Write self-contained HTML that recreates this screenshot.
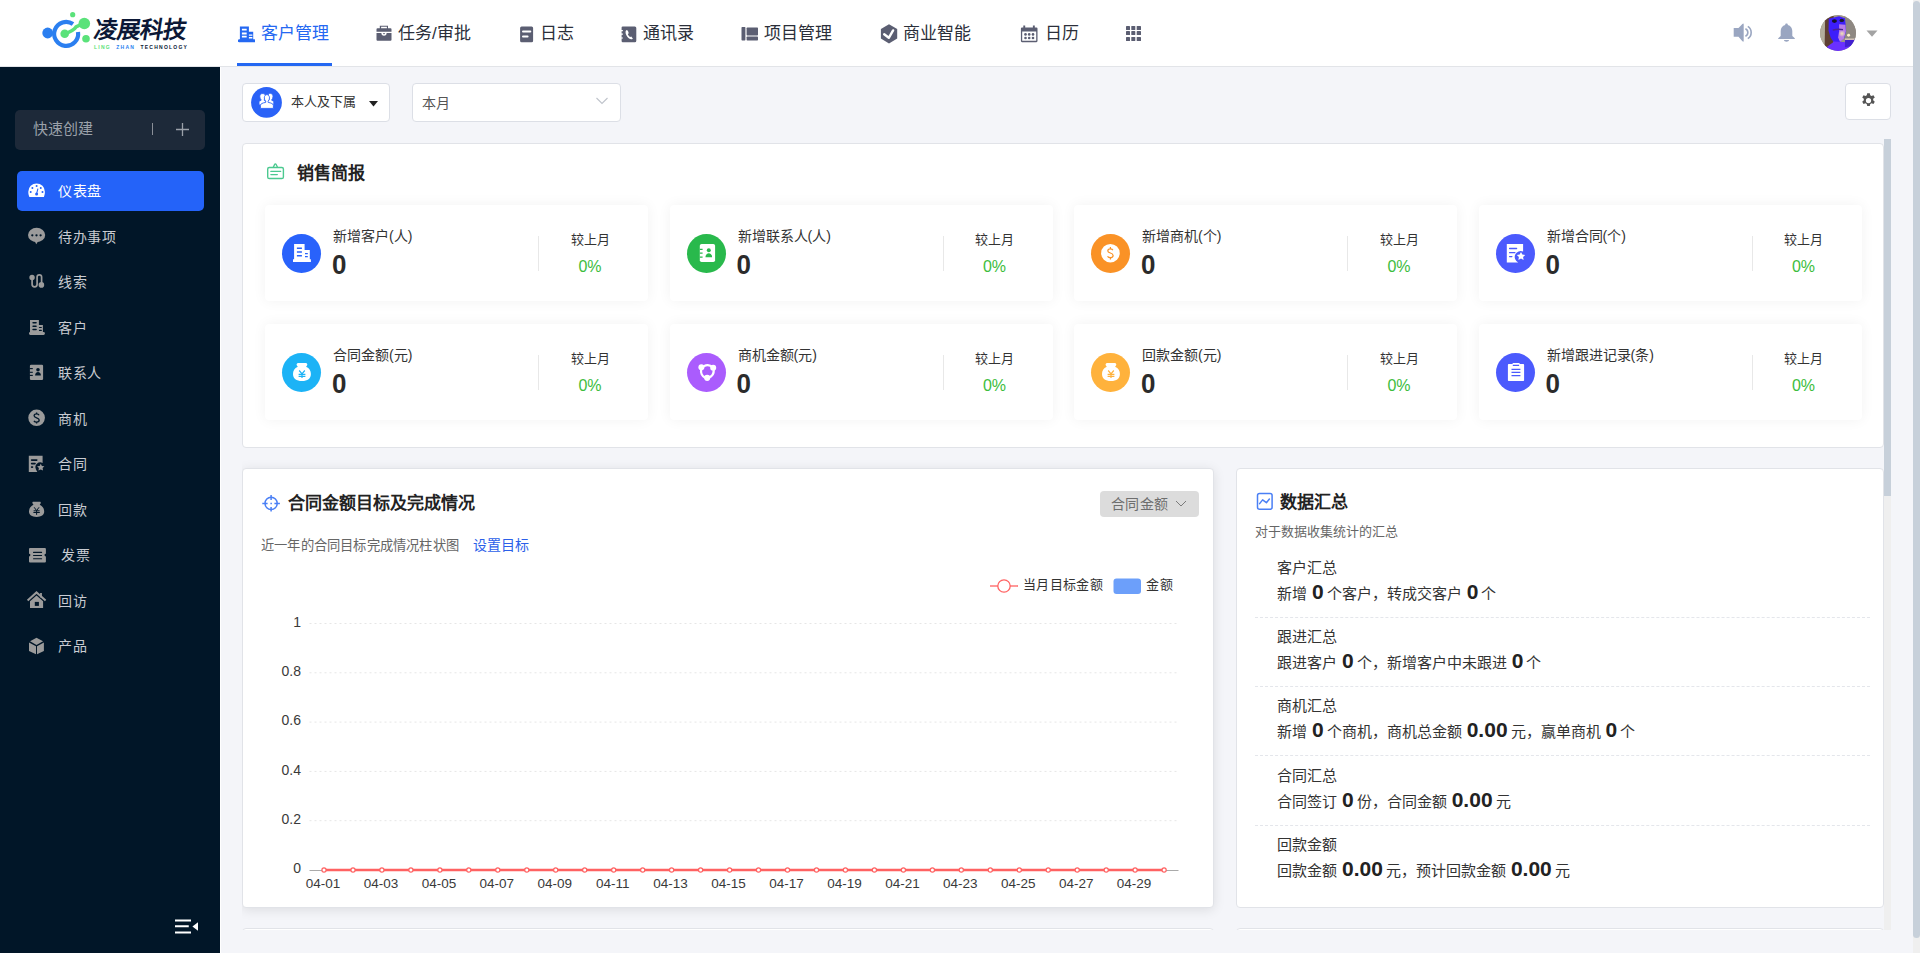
<!DOCTYPE html>
<html lang="zh-CN"><head><meta charset="utf-8">
<style>
*{box-sizing:border-box;margin:0;padding:0}
html,body{width:1920px;height:953px;overflow:hidden;background:#f4f5f9;font-family:"Liberation Sans",sans-serif;color:#333}
.abs{position:absolute}
svg{display:block}
#hdr{position:absolute;left:0;top:0;width:1913px;height:67px;background:#fff;border-bottom:1px solid #e2e4e8}
.nav{position:absolute;top:0;height:66px;font-size:17px;font-weight:500;color:#2b2f3a;white-space:nowrap}
.nav .ic{position:absolute;top:26px;width:16px;height:16px}
.nav .tx{position:absolute;top:23px;line-height:22px}
.nav.on{color:#2468f2}
.nav.on .bar{position:absolute;left:-1px;right:-1px;top:63px;height:3px;background:#2468f2}
#vsb{position:absolute;left:1913px;top:0;width:7px;height:953px;background:#efefef}
#vsb i{position:absolute;left:0;top:1px;width:7px;height:937px;background:#c7d0da;border-radius:4px}
#side{position:absolute;left:0;top:67px;width:220px;height:886px;background:#011628}
#sideline{position:absolute;left:220px;top:67px;width:1px;height:886px;background:#fff}
.qc{position:absolute;left:15px;top:110px;width:190px;height:40px;background:#1d2939;border-radius:5px;color:#9ba1aa;font-size:15px}
.si{position:absolute;left:17px;width:187px;height:40px;border-radius:5px;color:#c9ccd2;font-size:14px;letter-spacing:0.6px}
.si.on{background:#2463f9;color:#fff}
.si .ic{position:absolute;left:11px;top:12px;width:17px;height:17px}
.si .tx{position:absolute;left:41px;top:10px;line-height:20px}
</style></head><body>

<div id="hdr">
  <!-- logo -->
  <svg class="abs" style="left:40px;top:10px" width="56" height="44" viewBox="0 0 56 44">
    <circle cx="7.7" cy="23" r="5.4" fill="#2b7ff0"/>
    <path d="M33 14 A12 12 0 1 0 38 22" fill="none" stroke="#2b7ff0" stroke-width="4.2"/>
    <circle cx="24.7" cy="23.8" r="4.3" fill="#5ae27a"/>
    <path d="M24.7 23.8 C30 22 34 20 36 17 L44.3 13" stroke="#5ae27a" stroke-width="3.6" fill="none"/>
    <circle cx="44.3" cy="13.5" r="5.8" fill="#5ae27a"/>
    <circle cx="32.7" cy="4.7" r="2.6" fill="#5ae27a"/>
    <circle cx="46" cy="28.8" r="3.8" fill="#5ae27a"/>
  </svg>
  <div class="abs" style="left:92px;top:16px;font-size:23.5px;font-weight:900;color:#0c1836;letter-spacing:0px;line-height:28px;transform:skewX(-9deg);transform-origin:0 100%;white-space:nowrap">凌展科技</div>
  <div class="abs" style="left:94px;top:44px;font-size:5px;font-weight:bold;letter-spacing:1.25px;line-height:6px;white-space:nowrap"><span style="color:#5ae27a">LING</span>&nbsp;&nbsp;<span style="color:#2b7ff0">ZHAN</span>&nbsp;&nbsp;<span style="color:#0c1836">TECHNOLOGY</span></div>

  <!-- NAV -->
  <div class="nav on" style="left:238px;width:93px"><span class="tx" style="left:23px">客户管理</span><i class="bar"></i></div>
  <svg class="abs" style="left:237.5px;top:25.5px" width="17" height="17" viewBox="0 0 17 17"><path fill="#2468f2" fill-rule="evenodd" d="M1.9 .4h9v5.3h4.3v7.6h1.1a1.5 1.5 0 0 1 0 3H1.2a1.5 1.5 0 0 1 0-3h.7z M3.9 2.7h4.8v1.9H3.9z M3.9 6.5h4.8v1.9H3.9z M3.9 9.8h4.8v1.8H3.9z M10.9 8.4h3.5v1.3h-3.5z M10.9 10.9h3.5v1.5h-3.5z"/></svg>
  <div class="nav" style="left:376px"><span class="tx" style="left:22px">任务/审批</span></div>
  <svg class="abs" style="left:375.5px;top:25px" width="16" height="16" viewBox="0 0 16 16"><path fill="#5b5e72" fill-rule="evenodd" d="M3.8.7h8.2v2.5h2.5a1 1 0 0 1 1 1v2.5H.5V4.2a1 1 0 0 1 1-1h2.3z M5.1 1.8v1.4h5.8V1.8z M.5 8.1h4.9a2.6 2.6 0 0 0 5.2 0h4.9v6.6a1 1 0 0 1-1 1h-13a1 1 0 0 1-1-1z"/><path fill="#5b5e72" d="M6.8 8.1h2.4l-1.2 1.5z"/></svg>
  <div class="nav" style="left:519px"><span class="tx" style="left:21px">日志</span></div>
  <svg class="abs" style="left:518.5px;top:25.5px" width="16" height="17" viewBox="0 0 16 17"><path fill="#5b5e72" fill-rule="evenodd" d="M2.6.4h10a1.5 1.5 0 0 1 1.5 1.5v12.8a1.5 1.5 0 0 1-1.5 1.5h-10a1.5 1.5 0 0 1-1.5-1.5V1.9A1.5 1.5 0 0 1 2.6.4z M4 4.5a1 1 0 0 0 0 2h7.3a1 1 0 0 0 0-2z M4 9.4a1 1 0 0 0 0 2h4.6a1 1 0 0 0 0-2z"/></svg>
  <div class="nav" style="left:621px"><span class="tx" style="left:22px">通讯录</span></div>
  <svg class="abs" style="left:620.5px;top:25.5px" width="16" height="17" viewBox="0 0 16 17"><path fill="#5b5e72" fill-rule="evenodd" d="M1.8.4h12a1.5 1.5 0 0 1 1.5 1.5v12.8a1.5 1.5 0 0 1-1.5 1.5h-12a1.2 1.2 0 0 1-1.2-1.2V12.6h1.3v-1.1H.6V8.7h1.3V7.6H.6V5.2h1.3V4.1H.6V1.6A1.2 1.2 0 0 1 1.8.4z M5.6 3.9c-1.2.5-1.5 2.7-.2 5.3 1.5 2.9 4 4.6 5.6 4l.9-.5-1.6-2.3-1.2.6c-.9-.5-1.9-1.8-2.3-3l1-.7-.9-2.6z"/></svg>
  <div class="nav" style="left:741px"><span class="tx" style="left:23px">项目管理</span></div>
  <svg class="abs" style="left:740.5px;top:25.5px" width="18" height="16" viewBox="0 0 18 16"><g fill="#5b5e72"><rect x="0.5" y="1" width="3.9" height="13.4" rx="0.7"/><rect x="5.6" y="1.5" width="11.4" height="7.9" rx="0.7"/><rect x="5.6" y="10.6" width="11.4" height="3.8" rx="0.7"/></g></svg>
  <div class="nav" style="left:880px"><span class="tx" style="left:23px">商业智能</span></div>
  <svg class="abs" style="left:879.5px;top:23.5px" width="18" height="20" viewBox="0 0 18 20"><path fill="#5b5e72" fill-rule="evenodd" d="M9 .3l8.2 4.7v9.5L9 19.4.9 14.5V5z"/><path fill="none" stroke="#fff" stroke-width="2.4" stroke-linecap="round" stroke-linejoin="round" d="M4.2 10.2l4.6 3.6 4.3-7.4"/></svg>
  <div class="nav" style="left:1020px"><span class="tx" style="left:25px">日历</span></div>
  <svg class="abs" style="left:1019.5px;top:24.5px" width="18" height="18" viewBox="0 0 18 18"><path fill="#5b5e72" fill-rule="evenodd" d="M3.3.4h1.9v2.1h7.7V.4h1.9v2.1h1.6a1.1 1.1 0 0 1 1.1 1.1v12.5a1.1 1.1 0 0 1-1.1 1.1H2a1.1 1.1 0 0 1-1.1-1.1V3.6A1.1 1.1 0 0 1 2 2.5h1.3z M2.2 6.4v9.3h14V6.4z"/><g fill="#5b5e72"><circle cx="5.5" cy="9.4" r="1.3"/><circle cx="9.2" cy="9.4" r="1.3"/><circle cx="13" cy="9.4" r="1.3"/><circle cx="5.5" cy="13" r="1.3"/><circle cx="9.2" cy="13" r="1.3"/><circle cx="13" cy="13" r="1.3"/></g></svg>
  <svg class="abs" style="left:1126px;top:26px" width="15" height="15" viewBox="0 0 15 15"><g fill="#5b5e72"><rect x="0" y="0" width="4" height="4" rx=".6"/><rect x="5.3" y="0" width="4" height="4" rx=".6"/><rect x="10.7" y="0" width="4.3" height="4" rx=".6"/><rect x="0" y="5.1" width="4" height="4" rx=".6"/><rect x="5.3" y="5.1" width="4" height="4" rx=".6"/><rect x="10.7" y="5.1" width="4.3" height="4" rx=".6"/><rect x="0" y="10.9" width="4" height="4.1" rx=".6"/><rect x="5.3" y="10.9" width="4" height="4.1" rx=".6"/><rect x="10.7" y="10.9" width="4.3" height="4.1" rx=".6"/></g></svg>

  <!-- right icons -->
  <svg class="abs" style="left:1726px;top:16px" width="30" height="30" viewBox="1726 16 30 30"><path fill="#9aa6c1" d="M1733.7 28.1H1738.5L1742.4 24.1Q1743.7 22.9 1743.7 24.6V40.7Q1743.7 42.4 1742.4 41.2L1738.5 36.8H1733.7z"/><path fill="none" stroke="#9aa6c1" stroke-width="1.6" d="M1745.4 28.7A4.1 4.1 0 0 1 1745.4 36.2 M1747.8 26.3A7.3 7.3 0 0 1 1747.8 38.6"/></svg>
  <svg class="abs" style="left:1772px;top:16px" width="30" height="30" viewBox="1772 16 30 30"><path fill="#9aa6c1" d="M1786.5 23.4c.8 0 1.3.5 1.3 1.2v.4c2.9.7 4.5 3.1 4.5 6.1v4.9l2.5 2.3v.6h-16.6v-.6l2.5-2.3v-4.9c0-3 1.6-5.4 4.5-6.1v-.4c0-.7.5-1.2 1.3-1.2z M1784 40.1h5c0 1-1.1 1.7-2.5 1.7s-2.5-.7-2.5-1.7z"/></svg>
  <svg class="abs" style="left:1819.5px;top:14.8px" width="36" height="36" viewBox="110 100 736 736">
    <defs><clipPath id="av"><circle cx="478" cy="468" r="367"/></clipPath>
    <filter id="avb" x="-5%" y="-5%" width="110%" height="110%"><feGaussianBlur stdDeviation="16"/></filter><radialGradient id="hl" cx="0.5" cy="0.5" r="0.5"><stop offset="0" stop-color="#f3e6b0"/><stop offset="1" stop-color="#f3e6b0" stop-opacity="0"/></radialGradient></defs>
    <g clip-path="url(#av)"><g>
      <rect x="100" y="90" width="760" height="760" fill="#9d9486"/>
      <rect x="100" y="90" width="130" height="760" fill="#b3ad9c"/>
      <path d="M215 140 L390 120 L380 780 L205 780z" fill="#5e3f33"/>
      <rect x="600" y="90" width="260" height="500" fill="#8e8882"/>
      <path d="M290 175 L500 125 L620 165 L645 420 L610 560 L520 650 L400 665 L330 570 L285 420z" fill="#3d1efa"/>
      <path d="M500 290 L630 300 L640 430 L600 580 L520 650 L480 560 L500 430z" fill="#b77de8"/>
      <circle cx="560" cy="480" r="70" fill="url(#hl)"/>
      <path d="M370 410 Q470 380 580 400" stroke="#4a2590" stroke-width="28" fill="none"/>
      <path d="M200 790 L400 640 L600 650 L760 700 L870 800 L870 880 L200 880z" fill="#6a30ff"/>
      <path d="M620 590 L820 590 L820 720 L620 760z" fill="#4220d0"/>
      <rect x="620" y="580" width="200" height="30" fill="#d8c9b8"/>
      <circle cx="695" cy="515" r="30" fill="#fff4c8"/>
    </g><ellipse cx="405" cy="225" rx="52" ry="36" fill="#14102a"/><ellipse cx="555" cy="210" rx="46" ry="34" fill="#1c1830"/></g>
  </svg>
  <svg class="abs" style="left:1866px;top:30px" width="12" height="7" viewBox="0 0 12 7"><path d="M0.5 0.5h11L6 6.8z" fill="#a3a3a3"/></svg>
</div>

<div id="vsb"><i></i></div>

<!-- SIDEBAR -->
<div id="side"></div>
<div id="sideline"></div>
<div class="qc"><span class="abs" style="left:18px;top:9px;line-height:20px">快速创建</span><i class="abs" style="left:137px;top:13px;width:1px;height:12px;background:#8a8f98"></i><svg class="abs" style="left:161px;top:13px" width="13" height="13" viewBox="0 0 13 13"><path d="M6.5 0v13M0 6.5h13" stroke="#9ba1aa" stroke-width="1.3"/></svg></div>

<div class="si on" style="top:171.0px"><span class="tx" style="left:41px">仪表盘</span></div>
<div class="si" style="top:216.5px"><span class="tx" style="left:41px">待办事项</span></div>
<div class="si" style="top:262.0px"><span class="tx" style="left:41px">线索</span></div>
<div class="si" style="top:307.5px"><span class="tx" style="left:41px">客户</span></div>
<div class="si" style="top:353.0px"><span class="tx" style="left:41px">联系人</span></div>
<div class="si" style="top:398.5px"><span class="tx" style="left:41px">商机</span></div>
<div class="si" style="top:444.0px"><span class="tx" style="left:41px">合同</span></div>
<div class="si" style="top:489.5px"><span class="tx" style="left:41px">回款</span></div>
<div class="si" style="top:535.0px"><span class="tx" style="left:44px">发票</span></div>
<div class="si" style="top:580.5px"><span class="tx" style="left:41px">回访</span></div>
<div class="si" style="top:626.0px"><span class="tx" style="left:41px">产品</span></div><svg class="abs" style="left:0;top:0" width="220" height="953" viewBox="0 0 220 953">
<path fill="#fff" d="M36.6 183.4a8.3 8.3 0 0 1 8.3 8.3c0 2-.4 3.6-1 5.2H29.4c-.7-1.6-1.1-3.2-1.1-5.2a8.3 8.3 0 0 1 8.3-8.3z"/>
<g fill="#2463f9"><circle cx="36.6" cy="186.1" r="1"/><circle cx="32.4" cy="188" r="1"/><circle cx="40.75" cy="188" r="1"/><circle cx="30.7" cy="192" r="1"/><circle cx="42.5" cy="192" r="1"/><circle cx="36.6" cy="193.9" r="1.5"/></g>
<path stroke="#2463f9" stroke-width="1.1" d="M36.6 193.9L37.9 188.6"/>
<ellipse cx="36.6" cy="235" rx="8.6" ry="7.2" fill="#9b9b9b"/><path fill="#9b9b9b" d="M34.6 241l1.7 3.2 1.9-3.2z"/>
<g fill="#011628"><circle cx="32.3" cy="235.3" r="1.15"/><circle cx="36.5" cy="235.3" r="1.15"/><circle cx="40.6" cy="235.3" r="1.15"/></g>
<path fill="none" stroke="#9b9b9b" stroke-width="1.7" d="M32.1 277.6V284.3a2.5 2.5 0 0 0 5 0V277.05a2.25 2.25 0 0 1 4.5 0V284.9"/>
<circle cx="32.06" cy="277.56" r="2.7" fill="#9b9b9b"/><circle cx="41.4" cy="284.9" r="2.8" fill="#9b9b9b"/>
<path fill="#9b9b9b" d="M30 319.9h8.9v5.1h4v7h.6a1.45 1.45 0 0 1 0 2.9H30.4a1.45 1.45 0 0 1 0-2.9h-.4z"/>
<g fill="#011628"><rect x="32.3" y="322" width="4.5" height="1.6" rx=".8"/><rect x="32.3" y="325.5" width="4.5" height="1.6" rx=".8"/><rect x="32.3" y="328.7" width="4.5" height="1.6" rx=".8"/><rect x="38.9" y="326.9" width="3" height="1.2" rx=".6"/><rect x="38.9" y="329.8" width="3" height="1.2" rx=".6"/></g>
<rect x="29.9" y="364.8" width="13.2" height="15.1" rx="1.2" fill="#9b9b9b"/>
<g fill="#011628"><rect x="29.5" y="368.05" width="3.3" height="1.1"/><rect x="29.5" y="371.75" width="3.3" height="1.1"/><rect x="29.5" y="374.85" width="3.3" height="1.1"/><circle cx="38" cy="369.7" r="1.8"/><path d="M35.1 375.6c0-2.1 1.3-3.5 2.9-3.5s2.9 1.4 2.9 3.5z"/></g>
<circle cx="36.6" cy="417.8" r="8.3" fill="#9b9b9b"/>
<path fill="none" stroke="#011628" stroke-width="1.3" d="M39.1 415.2c-.4-.8-1.3-1.3-2.5-1.3-1.4 0-2.5.8-2.5 1.9 0 2.6 5.1 1.6 5.1 4.3 0 1.1-1.1 2-2.6 2-1.2 0-2.2-.5-2.7-1.3 M36.6 412.6v1.3 M36.6 422.1v1.5"/>
<path fill="#9b9b9b" d="M28.8 455.8h13.8v7.2a4.8 4.8 0 0 0-6.6 6.4l1.3 2.5H28.8z"/>
<g fill="#011628"><rect x="30.8" y="459.3" width="6.8" height="1.6" rx=".8"/><rect x="30.8" y="462.8" width="5" height="1.6" rx=".8"/><rect x="30.8" y="466.3" width="2.5" height="1.6" rx=".8"/></g>
<path fill="#9b9b9b" d="M40.75 463.7l1.15 2.3 2.5.35-1.8 1.75.45 2.5-2.3-1.2-2.3 1.2.45-2.5-1.8-1.75 2.5-.35z"/>
<path fill="#9b9b9b" d="M33.2 501.8h6.6c.9 0 1.3 1 .8 1.7l-.9 1.3c3 1.2 4.5 4 4.5 6.8 0 3.4-2.8 5.3-7.6 5.3s-7.6-1.9-7.6-5.3c0-2.8 1.5-5.6 4.5-6.8l-.9-1.3c-.5-.7-.1-1.7.6-1.7z"/>
<path fill="none" stroke="#011628" stroke-width="1" d="M34.2 507.3l2.4 3.3 2.4-3.3 M33.6 510.8h6 M33.4 512.5h6.4 M36.6 510.6v4.2"/>
<path fill="#9b9b9b" d="M30 547.9h14.9a1 1 0 0 1 1 1v4.8a1.4 1.4 0 0 0 0 2.8v5.1a1 1 0 0 1-1 1H30a1 1 0 0 1-1-1v-5.1a1.4 1.4 0 0 0 0-2.8v-4.8a1 1 0 0 1 1-1z"/>
<g fill="#011628"><rect x="33" y="551.85" width="9.1" height="1.1" rx=".5"/><rect x="33" y="554.95" width="9.1" height="1.1" rx=".5"/><rect x="33" y="558.15" width="9.1" height="1.1" rx=".5"/></g>
<path fill="none" stroke="#9b9b9b" stroke-width="2" stroke-linejoin="miter" d="M27.6 600.6L36.5 592.4L45.6 600.6"/>
<path fill="#9b9b9b" d="M40.1 593h1.8v4.5h-1.8z M36.5 595.6l6.6 5.6v6.7H30v-6.7z"/>
<rect x="34.8" y="601.9" width="4.1" height="4" fill="#011628"/>
<path fill="#9b9b9b" d="M30.05 641.3L36.5 637.8L43.1 641.3L36.5 645z M29 642.6L36 646.2V654.2L29 651.1z M37 646.2L43.9 642.6V651.1L37 654.2z"/>
<path fill="#fff" d="M175 919.5h16v2h-16z M175 925.25h13.75v2h-13.75z M175 931.5h16v2h-16z M198 922.3v8.4l-5.6-4.2z"/>
</svg>



<style>
.box{position:absolute;background:#fff;border:1px solid #dcdfe6;border-radius:4px}
#scroll{position:absolute;left:242px;top:139px;width:1642px;height:791px;overflow:hidden}
#isb{position:absolute;left:1884px;top:139px;width:7px;height:791px;background:#efefef}
#isb i{position:absolute;left:0;top:0;width:7px;height:357px;background:#c7d0da}
.panel{position:absolute;background:#fff;border:1px solid #e1e3e8;border-radius:4px}
.panel.sh{box-shadow:0 2px 12px rgba(0,0,0,.1)}
.card{position:absolute;width:383px;height:96px;background:#fff;border-radius:4px;box-shadow:0 0 14px rgba(0,0,0,.055)}
.card .circ{position:absolute;left:17px;top:29px;width:39px;height:39px;border-radius:50%}
.card .circ svg{position:absolute;left:0;top:0}
.card .lb{position:absolute;left:68px;top:21px;font-size:14px;line-height:20px;color:#333;white-space:nowrap}
.card .val{position:absolute;left:67px;top:45px;font-size:26px;font-weight:bold;line-height:30px;color:#2b2b2b;transform:scaleY(1.05);transform-origin:0 100%}
.card .dv{position:absolute;left:273px;top:31px;width:1px;height:35px;background:#e8e8e8}
.card .cmp{position:absolute;left:290px;width:70px;text-align:center;top:25px;font-size:13px;line-height:20px;color:#333}
.card .pct{position:absolute;left:290px;width:70px;text-align:center;top:52px;font-size:16px;line-height:20px;color:#3dbd3d}
.ptitle{position:absolute;font-size:17px;font-weight:bold;color:#222;line-height:24px;white-space:nowrap}
.sum{position:absolute;left:40px;font-size:15px;color:#333;white-space:nowrap}
.sum b{font-size:21px;font-weight:bold;color:#222;margin:0 3px 0 5px}
.sep{position:absolute;left:18px;right:13px;height:0;border-top:1px dashed #e4e6eb}
</style>

<div class="box" style="left:242px;top:83px;width:148px;height:39px"></div>
<svg class="abs" style="left:250px;top:86px" width="34" height="34" viewBox="250 86 34 34"><circle cx="266.5" cy="102.4" r="15.4" fill="#2a62f7"/><g fill="#fff" stroke="#2a62f7" stroke-width="0.9"><path d="M263.2 93.6c1.4 0 2.3 1.3 2.3 3 0 1.3-.5 2.4-1.2 3l.1.9c1 .3 1.5.7 1.5 1.5V105H259v-3c0-.8.6-1.3 1.9-1.5l.1-.9c-.7-.6-1.2-1.7-1.2-3 0-1.7 1-3 2.3-3z"/><path d="M270.7 93.6c1.4 0 2.3 1.3 2.3 3 0 1.3-.5 2.4-1.2 3l.1.9c1.3.2 1.9.7 1.9 1.5v3h-6.3v-3.4c0-.8.5-1.2 1.5-1.5l.1-.9c-.7-.6-1.2-1.7-1.2-3 0-1.7 1-3 2.3-3z"/><path d="M266.9 94.6c1.5 0 2.6 1.4 2.6 3.3 0 1.4-.6 2.6-1.4 3.3l.1 1.2c2.9.5 5.2 1.4 5.2 3.1v2.9h-13v-2.9c0-1.7 2.3-2.6 5.2-3.1l.1-1.2c-.8-.7-1.4-1.9-1.4-3.3 0-1.9 1.1-3.3 2.6-3.3z"/></g></svg>
<div class="abs" style="left:291px;top:92px;font-size:13px;line-height:20px;color:#333">本人及下属</div>
<svg class="abs" style="left:369px;top:100.8px" width="9" height="6" viewBox="0 0 9 6"><path d="M0 0h9L4.5 5.5z" fill="#222"/></svg>
<div class="box" style="left:412px;top:83px;width:209px;height:39px"></div>
<div class="abs" style="left:422px;top:93px;font-size:14px;line-height:20px;color:#555">本月</div>
<svg class="abs" style="left:596px;top:97px" width="12" height="8" viewBox="0 0 12 8"><path d="M.5 1l5.5 5.5L11.5 1" fill="none" stroke="#bfc3cb" stroke-width="1.1"/></svg>
<div class="box" style="left:1845px;top:83px;width:46px;height:37px"></div>
<svg class="abs" style="left:1860.5px;top:92.8px" width="15" height="15" viewBox="0 0 16 16"><path fill="#555" fill-rule="evenodd" d="M6.6.3h2.8l.45 2.2 1.35.75 2.1-.85 1.4 2.35-1.7 1.5v1.6l1.7 1.5-1.4 2.35-2.1-.85-1.35.8-.45 2.15H6.6l-.45-2.15-1.35-.8-2.1.85-1.4-2.35 1.7-1.5v-1.6l-1.7-1.5 1.4-2.35 2.1.85 1.35-.75z M8 5.2a2.8 2.8 0 1 0 0 5.6 2.8 2.8 0 0 0 0-5.6z"/></svg>
<div id="isb"><i></i></div>
<div id="scroll">
<div class="abs" style="left:-242px;top:-139px;width:1920px;height:953px">
<div class="panel" style="left:242px;top:143px;width:1642px;height:305px"></div>
<svg class="abs" style="left:260px;top:158px" width="30" height="28" viewBox="260 158 30 28"><g fill="none" stroke="#4cc990" stroke-width="1.4" stroke-linecap="round"><rect x="267.7" y="167.5" width="15.7" height="11" rx="1.6"/><path d="M273.3 167.3l1.4-3c.3-.6 1-.6 1.3 0l1.5 3"/><path d="M270.9 171.4h9.7 M270.9 174.6h6.4"/></g></svg>
<div class="ptitle" style="left:297px;top:162px">销售简报</div>
<div class="card" style="left:265.0px;top:205px"><div class="circ" style="background:#2962fb"><svg width="40" height="40" viewBox="0 0 40 40"><path fill="#fff" d="M12.1 10h10.5v6h5.2v9.2h1.1v2.9H11v-2.9h1.1z"/><path fill="#2962fb" d="M14.9 13.4h5v1.5h-5z M14.9 17.3h5v1.5h-5z M14.9 21.1h5v1.5h-5z M23 19h2.8v1.2H23z M23 22h2.8v1.2H23z"/></svg></div><div class="lb">新增客户(人)</div><div class="val">0</div><i class="dv"></i><div class="cmp">较上月</div><div class="pct">0%</div></div>
<div class="card" style="left:669.5px;top:205px"><div class="circ" style="background:#29b94c"><svg width="40" height="40" viewBox="0 0 40 40"><rect x="12.8" y="10" width="15.3" height="18.1" rx="1.8" fill="#fff"/><path fill="#29b94c" d="M12.8 14.7h2.8v1.2h-2.8z M12.8 18.6h2.8v1.2h-2.8z M12.8 22.5h2.8v1.2h-2.8z"/><circle cx="21.8" cy="16.3" r="2" fill="#29b94c"/><path fill="#29b94c" d="M18.5 23.2c0-2.3 1.5-4 3.3-4s3.3 1.7 3.3 4z"/></svg></div><div class="lb">新增联系人(人)</div><div class="val">0</div><i class="dv"></i><div class="cmp">较上月</div><div class="pct">0%</div></div>
<div class="card" style="left:1074.0px;top:205px"><div class="circ" style="background:#fa9226"><svg width="40" height="40" viewBox="0 0 40 40"><circle cx="19.4" cy="19.2" r="9.3" fill="#fff"/><path fill="none" stroke="#fa9226" stroke-width="1.2" d="M21.9 16.1c-.5-.7-1.5-1.2-2.5-1.2-1.5 0-2.6.8-2.6 2 0 2.7 5.3 1.6 5.3 4.5 0 1.2-1.2 2.2-2.8 2.2-1.1 0-2.1-.5-2.8-1.3 M19.4 13v1.9 M19.4 23.5v1.9"/></svg></div><div class="lb">新增商机(个)</div><div class="val">0</div><i class="dv"></i><div class="cmp">较上月</div><div class="pct">0%</div></div>
<div class="card" style="left:1478.5px;top:205px"><div class="circ" style="background:#4b5afd"><svg width="40" height="40" viewBox="0 0 40 40"><path fill="#fff" d="M10.8 10h16.3v7.6a5.2 5.2 0 0 0-4.9 10.8H10.8z"/><path stroke="#4b5afd" stroke-width="1.3" stroke-linecap="round" d="M13.6 14.5h7 M13.6 18.7h5.3 M13.6 22.6h2.3"/><path fill="#fff" d="M25 17.9l1.3 2.7 2.9.4-2.1 2 .5 2.9-2.6-1.4-2.6 1.4.5-2.9-2.1-2 2.9-.4z"/></svg></div><div class="lb">新增合同(个)</div><div class="val">0</div><i class="dv"></i><div class="cmp">较上月</div><div class="pct">0%</div></div>
<div class="card" style="left:265.0px;top:324px"><div class="circ" style="background:#1cb3f6"><svg width="40" height="40" viewBox="0 0 40 40"><path fill="#fff" d="M16.2 10h7.6c1.3 0 2 1.5 1.2 2.6l-.9 1.1c3.4 1.4 4.8 4.3 4.8 7.3 0 4.5-3.2 7.1-8.9 7.1s-9-2.6-9-7.1c0-3 1.4-5.9 4.8-7.3l-.9-1.1c-.8-1.1-.1-2.6 1.3-2.6z"/><path fill="none" stroke="#1cb3f6" stroke-width="1.2" d="M17.2 17.5l2.8 3.3 2.8-3.3 M16.6 21.3h6.8 M16.6 23.4h6.8 M20 20.8v4.1"/></svg></div><div class="lb">合同金额(元)</div><div class="val">0</div><i class="dv"></i><div class="cmp">较上月</div><div class="pct">0%</div></div>
<div class="card" style="left:669.5px;top:324px"><div class="circ" style="background:#aa5cfd"><svg width="40" height="40" viewBox="0 0 40 40"><g fill="none" stroke="#fff" stroke-width="2.3"><path d="M14.2 16.5c-.7 3.3.9 6.7 3.9 8.1 M16.8 13.2c3-1.5 6.7-1 9 1.2 M26.7 17.1c.2 3.3-1.9 6.4-4.9 7.5"/></g><circle cx="14.4" cy="14.2" r="3" fill="#fff"/><circle cx="26.2" cy="14.7" r="3" fill="#fff"/><circle cx="20.2" cy="24.8" r="3.1" fill="#fff"/></svg></div><div class="lb">商机金额(元)</div><div class="val">0</div><i class="dv"></i><div class="cmp">较上月</div><div class="pct">0%</div></div>
<div class="card" style="left:1074.0px;top:324px"><div class="circ" style="background:#ffb23c"><svg width="40" height="40" viewBox="0 0 40 40"><path fill="#fff" d="M16.2 10h7.6c1.3 0 2 1.5 1.2 2.6l-.9 1.1c3.4 1.4 4.8 4.3 4.8 7.3 0 4.5-3.2 7.1-8.9 7.1s-9-2.6-9-7.1c0-3 1.4-5.9 4.8-7.3l-.9-1.1c-.8-1.1-.1-2.6 1.3-2.6z"/><path fill="none" stroke="#ffb23c" stroke-width="1.2" d="M17.2 17.5l2.8 3.3 2.8-3.3 M16.6 21.3h6.8 M16.6 23.4h6.8 M20 20.8v4.1"/></svg></div><div class="lb">回款金额(元)</div><div class="val">0</div><i class="dv"></i><div class="cmp">较上月</div><div class="pct">0%</div></div>
<div class="card" style="left:1478.5px;top:324px"><div class="circ" style="background:#4b5afd"><svg width="40" height="40" viewBox="0 0 40 40"><path fill="#fff" d="M12.7 11.1h3.7l.5-1.1h6.4l.5 1.1h3.5a.8.8 0 0 1 .8.8v15.4a.8.8 0 0 1-.8.8H12.7a.8.8 0 0 1-.8-.8V11.9a.8.8 0 0 1 .8-.8z"/><path stroke="#4b5afd" stroke-width="1.3" d="M15.5 16.3h8.9 M15.5 19.4h8.9 M15.5 22.6h8.9 M16.8 12.4h6.3"/></svg></div><div class="lb">新增跟进记录(条)</div><div class="val">0</div><i class="dv"></i><div class="cmp">较上月</div><div class="pct">0%</div></div>
<div class="panel sh" style="left:242px;top:468px;width:972px;height:440px">
<svg class="abs" style="left:-1px;top:-1px" width="971" height="439" viewBox="242 468 971 439"><line x1="309.5" x2="1178.5" y1="623.5" y2="623.5" stroke="#e6e6e6" stroke-width="1" stroke-dasharray="2 3"/><line x1="309.5" x2="1178.5" y1="672.8" y2="672.8" stroke="#e6e6e6" stroke-width="1" stroke-dasharray="2 3"/><line x1="309.5" x2="1178.5" y1="722.1" y2="722.1" stroke="#e6e6e6" stroke-width="1" stroke-dasharray="2 3"/><line x1="309.5" x2="1178.5" y1="771.4" y2="771.4" stroke="#e6e6e6" stroke-width="1" stroke-dasharray="2 3"/><line x1="309.5" x2="1178.5" y1="820.7" y2="820.7" stroke="#e6e6e6" stroke-width="1" stroke-dasharray="2 3"/><line x1="309.5" x2="1178.5" y1="870.5" y2="870.5" stroke="#aaaaaa" stroke-width="1"/><polyline points="324,870 1164,870" stroke="#ff6262" stroke-width="2.3" fill="none"/><circle cx="324.0" cy="870" r="2.1" fill="#fff" stroke="#ff6262" stroke-width="1.2"/><circle cx="353.0" cy="870" r="2.1" fill="#fff" stroke="#ff6262" stroke-width="1.2"/><circle cx="381.9" cy="870" r="2.1" fill="#fff" stroke="#ff6262" stroke-width="1.2"/><circle cx="410.9" cy="870" r="2.1" fill="#fff" stroke="#ff6262" stroke-width="1.2"/><circle cx="439.9" cy="870" r="2.1" fill="#fff" stroke="#ff6262" stroke-width="1.2"/><circle cx="468.8" cy="870" r="2.1" fill="#fff" stroke="#ff6262" stroke-width="1.2"/><circle cx="497.8" cy="870" r="2.1" fill="#fff" stroke="#ff6262" stroke-width="1.2"/><circle cx="526.8" cy="870" r="2.1" fill="#fff" stroke="#ff6262" stroke-width="1.2"/><circle cx="555.7" cy="870" r="2.1" fill="#fff" stroke="#ff6262" stroke-width="1.2"/><circle cx="584.7" cy="870" r="2.1" fill="#fff" stroke="#ff6262" stroke-width="1.2"/><circle cx="613.7" cy="870" r="2.1" fill="#fff" stroke="#ff6262" stroke-width="1.2"/><circle cx="642.7" cy="870" r="2.1" fill="#fff" stroke="#ff6262" stroke-width="1.2"/><circle cx="671.6" cy="870" r="2.1" fill="#fff" stroke="#ff6262" stroke-width="1.2"/><circle cx="700.6" cy="870" r="2.1" fill="#fff" stroke="#ff6262" stroke-width="1.2"/><circle cx="729.6" cy="870" r="2.1" fill="#fff" stroke="#ff6262" stroke-width="1.2"/><circle cx="758.5" cy="870" r="2.1" fill="#fff" stroke="#ff6262" stroke-width="1.2"/><circle cx="787.5" cy="870" r="2.1" fill="#fff" stroke="#ff6262" stroke-width="1.2"/><circle cx="816.5" cy="870" r="2.1" fill="#fff" stroke="#ff6262" stroke-width="1.2"/><circle cx="845.4" cy="870" r="2.1" fill="#fff" stroke="#ff6262" stroke-width="1.2"/><circle cx="874.4" cy="870" r="2.1" fill="#fff" stroke="#ff6262" stroke-width="1.2"/><circle cx="903.4" cy="870" r="2.1" fill="#fff" stroke="#ff6262" stroke-width="1.2"/><circle cx="932.4" cy="870" r="2.1" fill="#fff" stroke="#ff6262" stroke-width="1.2"/><circle cx="961.3" cy="870" r="2.1" fill="#fff" stroke="#ff6262" stroke-width="1.2"/><circle cx="990.3" cy="870" r="2.1" fill="#fff" stroke="#ff6262" stroke-width="1.2"/><circle cx="1019.3" cy="870" r="2.1" fill="#fff" stroke="#ff6262" stroke-width="1.2"/><circle cx="1048.2" cy="870" r="2.1" fill="#fff" stroke="#ff6262" stroke-width="1.2"/><circle cx="1077.2" cy="870" r="2.1" fill="#fff" stroke="#ff6262" stroke-width="1.2"/><circle cx="1106.2" cy="870" r="2.1" fill="#fff" stroke="#ff6262" stroke-width="1.2"/><circle cx="1135.1" cy="870" r="2.1" fill="#fff" stroke="#ff6262" stroke-width="1.2"/><circle cx="1164.1" cy="870" r="2.1" fill="#fff" stroke="#ff6262" stroke-width="1.2"/><text x="301" y="626.7" text-anchor="end" font-size="14" fill="#3a3a3a" font-family="Liberation Sans">1</text><text x="301" y="676.0" text-anchor="end" font-size="14" fill="#3a3a3a" font-family="Liberation Sans">0.8</text><text x="301" y="725.3" text-anchor="end" font-size="14" fill="#3a3a3a" font-family="Liberation Sans">0.6</text><text x="301" y="774.6" text-anchor="end" font-size="14" fill="#3a3a3a" font-family="Liberation Sans">0.4</text><text x="301" y="823.9" text-anchor="end" font-size="14" fill="#3a3a3a" font-family="Liberation Sans">0.2</text><text x="301" y="873.2" text-anchor="end" font-size="14" fill="#3a3a3a" font-family="Liberation Sans">0</text><text x="323.0" y="887.8" text-anchor="middle" font-size="13.5" fill="#3a3a3a" font-family="Liberation Sans">04-01</text><text x="380.9" y="887.8" text-anchor="middle" font-size="13.5" fill="#3a3a3a" font-family="Liberation Sans">04-03</text><text x="438.9" y="887.8" text-anchor="middle" font-size="13.5" fill="#3a3a3a" font-family="Liberation Sans">04-05</text><text x="496.8" y="887.8" text-anchor="middle" font-size="13.5" fill="#3a3a3a" font-family="Liberation Sans">04-07</text><text x="554.7" y="887.8" text-anchor="middle" font-size="13.5" fill="#3a3a3a" font-family="Liberation Sans">04-09</text><text x="612.7" y="887.8" text-anchor="middle" font-size="13.5" fill="#3a3a3a" font-family="Liberation Sans">04-11</text><text x="670.6" y="887.8" text-anchor="middle" font-size="13.5" fill="#3a3a3a" font-family="Liberation Sans">04-13</text><text x="728.6" y="887.8" text-anchor="middle" font-size="13.5" fill="#3a3a3a" font-family="Liberation Sans">04-15</text><text x="786.5" y="887.8" text-anchor="middle" font-size="13.5" fill="#3a3a3a" font-family="Liberation Sans">04-17</text><text x="844.4" y="887.8" text-anchor="middle" font-size="13.5" fill="#3a3a3a" font-family="Liberation Sans">04-19</text><text x="902.4" y="887.8" text-anchor="middle" font-size="13.5" fill="#3a3a3a" font-family="Liberation Sans">04-21</text><text x="960.3" y="887.8" text-anchor="middle" font-size="13.5" fill="#3a3a3a" font-family="Liberation Sans">04-23</text><text x="1018.3" y="887.8" text-anchor="middle" font-size="13.5" fill="#3a3a3a" font-family="Liberation Sans">04-25</text><text x="1076.2" y="887.8" text-anchor="middle" font-size="13.5" fill="#3a3a3a" font-family="Liberation Sans">04-27</text><text x="1134.1" y="887.8" text-anchor="middle" font-size="13.5" fill="#3a3a3a" font-family="Liberation Sans">04-29</text><line x1="990" x2="1018" y1="586" y2="586" stroke="#ff6262" stroke-width="1.3"/><circle cx="1004" cy="586" r="6.2" fill="#fff" stroke="#ff6262" stroke-width="1.3"/><rect x="1113.5" y="578.5" width="27.5" height="15.5" rx="3" fill="#6c9ffa"/></svg>
</div>
<svg class="abs" style="left:256px;top:488px" width="30" height="30" viewBox="256 488 30 30"><g fill="none" stroke="#4a7ff5" stroke-width="1.5"><circle cx="271.1" cy="503.4" r="6.1"/><path d="M271.1 495.1v4.9 M271.1 506.9v4.7 M262.3 503.4h5.3 M274.4 503.4h5.5 M270.4 503.4h1.5"/></g></svg>
<div class="ptitle" style="left:288px;top:492px">合同金额目标及完成情况</div>
<div class="abs" style="left:261px;top:536px;font-size:13.3px;letter-spacing:0.2px;line-height:20px;color:#666;white-space:nowrap">近一年的合同目标完成情况柱状图</div>
<div class="abs" style="left:473px;top:535px;font-size:14px;line-height:20px;color:#2b5fe9;white-space:nowrap">设置目标</div>
<div class="abs" style="left:1100px;top:491px;width:99px;height:26px;background:#dcdcdc;border-radius:4px"></div>
<div class="abs" style="left:1111px;top:493px;font-size:14px;letter-spacing:0.35px;line-height:22px;color:#6e6e6e">合同金额</div>
<svg class="abs" style="left:1175px;top:500px" width="12" height="8" viewBox="0 0 12 8"><path d="M1 1l5 5 5-5" fill="none" stroke="#7a7a7a" stroke-width="1"/></svg>
<div class="abs" style="left:1023px;top:575px;font-size:13px;letter-spacing:0.35px;line-height:20px;color:#333">当月目标金额</div>
<div class="abs" style="left:1146px;top:575px;font-size:13px;letter-spacing:1px;line-height:20px;color:#333">金额</div>
<div class="panel" style="left:1236px;top:468px;width:648px;height:440px">
<svg class="abs" style="left:13px;top:17px" width="30" height="30" viewBox="1250 486 30 30"><g fill="none" stroke="#4a7ff5"><rect x="1257.5" y="493.6" width="14.6" height="15.6" rx="2" stroke-width="1.5"/><path d="M1259.6 503.6l3-3.75 3.8 2.85 3-3.6" stroke-width="1.5" stroke-linecap="round" stroke-linejoin="round"/></g></svg>
<div class="ptitle" style="left:43px;top:22px">数据汇总</div>
<div class="abs" style="left:18px;top:53px;font-size:13px;line-height:20px;color:#666;white-space:nowrap">对于数据收集统计的汇总</div>
<div class="sum" style="top:89.0px;line-height:20px">客户汇总</div>
<div class="sum" style="top:110.0px;line-height:26px">新增<b>0</b>个客户，转成交客户<b>0</b>个</div>
<i class="sep" style="top:148.0px"></i>
<div class="sum" style="top:158.2px;line-height:20px">跟进汇总</div>
<div class="sum" style="top:179.2px;line-height:26px">跟进客户<b>0</b>个，新增客户中未跟进<b>0</b>个</div>
<i class="sep" style="top:217.2px"></i>
<div class="sum" style="top:227.4px;line-height:20px">商机汇总</div>
<div class="sum" style="top:248.4px;line-height:26px">新增<b>0</b>个商机，商机总金额<b>0.00</b>元，赢单商机<b>0</b>个</div>
<i class="sep" style="top:286.4px"></i>
<div class="sum" style="top:296.6px;line-height:20px">合同汇总</div>
<div class="sum" style="top:317.6px;line-height:26px">合同签订<b>0</b>份，合同金额<b>0.00</b>元</div>
<i class="sep" style="top:355.6px"></i>
<div class="sum" style="top:365.8px;line-height:20px">回款金额</div>
<div class="sum" style="top:386.8px;line-height:26px">回款金额<b>0.00</b>元，预计回款金额<b>0.00</b>元</div>
</div>
<div class="panel" style="left:242px;top:928px;width:972px;height:300px"></div>
<div class="panel" style="left:1236px;top:928px;width:648px;height:300px"></div>
</div></div>

</body></html>
